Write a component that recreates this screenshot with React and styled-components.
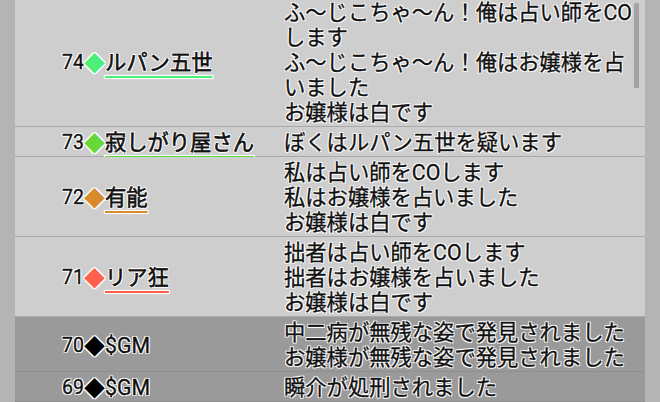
import React from "react";
import styled, { createGlobalStyle } from "styled-components";

const Global = createGlobalStyle`
  html, body { margin: 0; padding: 0; }
  body {
    background: #b4b4b4;
    width: 660px;
    height: 402px;
    overflow: hidden;
    font-family: Roboto, "Noto Sans CJK JP", sans-serif;
  }
`;

const Viewport = styled.div`
  position: relative;
  width: 660px;
  height: 402px;
  overflow: hidden;
  padding: 0 15px;
  box-sizing: border-box;
`;

const List = styled.div`
  margin-top: -3px;
  display: flex;
  flex-direction: column;
`;

const Row = styled.div`
  display: grid;
  grid-template-columns: 269px 1fr;
  background: ${(p) => (p.$system ? "#9a9a9a" : "#cecece")};
  border-bottom: 1px solid ${(p) => (p.$system ? "#8f8f8f" : "#a9a9a9")};
  font-size: 21.3px;
  line-height: 25px;
  color: #111;
  -webkit-text-stroke: 0.35px #111;
  text-shadow: -1px -1px 0 #fff, 1px -1px 0 #fff, -1px 1px 0 #fff,
    1px 1px 0 #fff, 0 0 2px #fff, 0 0 2px #fff;
`;

const Speaker = styled.div`
  display: flex;
  align-items: center;
  padding: 3px 0 1px 47px;
  white-space: nowrap;
`;

const Num = styled.span`
  font-size: 19.5px;
`;

const Mark = styled.span`
  color: ${(p) => p.$color};
  -webkit-text-stroke: 0;
  font-size: 21px;
  font-family: "Noto Sans CJK JP", sans-serif;
`;

const Name = styled.span`
  text-decoration: ${(p) => (p.$line ? "underline" : "none")};
  text-decoration-color: ${(p) => p.$line};
  text-decoration-thickness: 2px;
  text-underline-offset: 6px;
`;

const Message = styled.div`
  padding: 3px 6px 1px 0;
`;

const Line = styled.div``;

const Thumb = styled.div`
  position: absolute;
  left: 634px;
  top: 3px;
  width: 5px;
  height: 85px;
  background: #a3a3a3;
  border-radius: 1px;
`;

const rows = [
  {
    no: 74,
    name: "ルパン五世",
    color: "#4def7a",
    lines: [
      "ふ〜じこちゃ〜ん！俺は占い師をCOします",
      "ふ〜じこちゃ〜ん！俺はお嬢様を占いました",
      "お嬢様は白です",
    ],
  },
  {
    no: 73,
    name: "寂しがり屋さん",
    color: "#66d83c",
    lines: ["ぼくはルパン五世を疑います"],
  },
  {
    no: 72,
    name: "有能",
    color: "#d98a2c",
    lines: ["私は占い師をCOします", "私はお嬢様を占いました", "お嬢様は白です"],
  },
  {
    no: 71,
    name: "リア狂",
    color: "#ff604c",
    lines: ["拙者は占い師をCOします", "拙者はお嬢様を占いました", "お嬢様は白です"],
  },
  {
    no: 70,
    name: "$GM",
    color: "#000",
    system: true,
    lines: ["中二病が無残な姿で発見されました", "お嬢様が無残な姿で発見されました"],
  },
  {
    no: 69,
    name: "$GM",
    color: "#000",
    system: true,
    lines: ["瞬介が処刑されました"],
  },
];

export default function App() {
  return (
    <>
      <Global />
      <Viewport>
        <List>
          {rows.map((r) => (
            <Row key={r.no} $system={r.system}>
              <Speaker>
                <Num>{r.no}</Num>
                <Mark $color={r.color}>◆</Mark>
                <Name $line={r.system ? null : r.color}>{r.name}</Name>
              </Speaker>
              <Message>
                {r.lines.map((l, i) => (
                  <Line key={i}>{l}</Line>
                ))}
              </Message>
            </Row>
          ))}
        </List>
        <Thumb />
      </Viewport>
    </>
  );
}
